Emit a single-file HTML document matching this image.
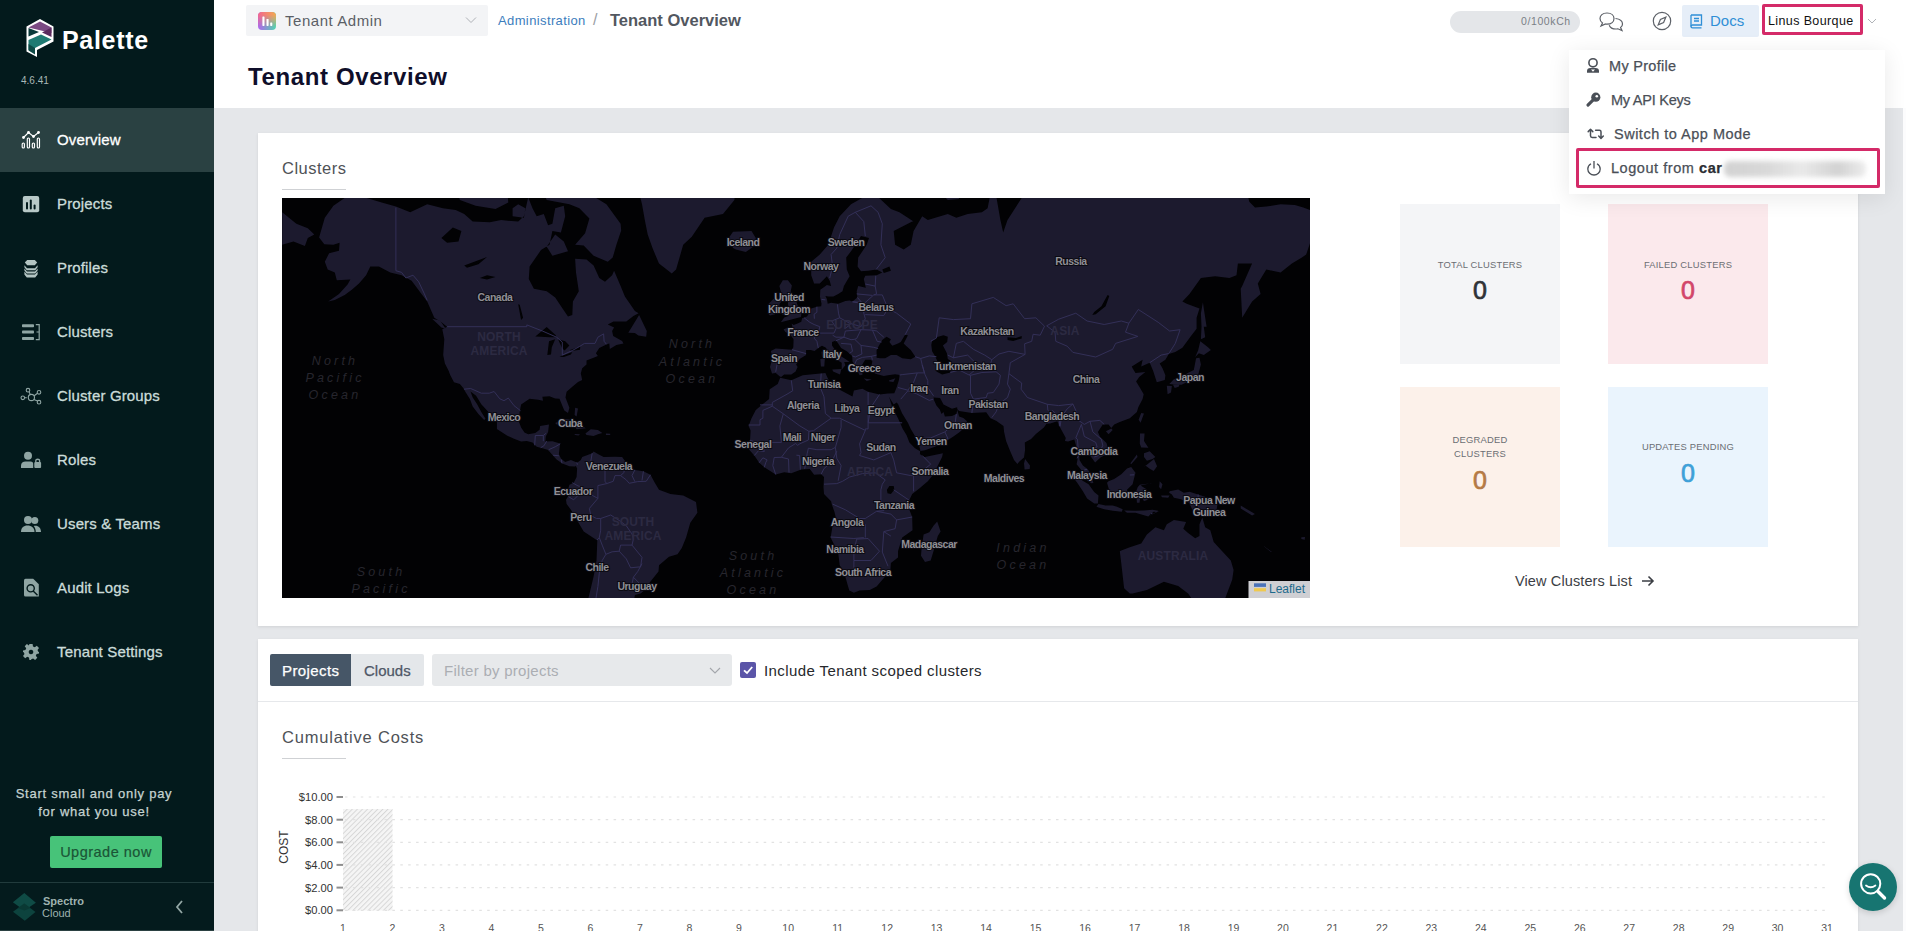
<!DOCTYPE html>
<html><head><meta charset="utf-8">
<style>
*{box-sizing:border-box;margin:0;padding:0}
html,body{width:1906px;height:931px;overflow:hidden;font-family:"Liberation Sans",sans-serif;background:#e5e7ea;position:relative}
.a{position:absolute;white-space:nowrap}
#side{position:absolute;left:0;top:0;width:214px;height:931px;background:#031a1c}
.nav{position:absolute;left:0;width:214px;height:64px;color:#cbdcd9;font-size:15px;-webkit-text-stroke:0.3px currentColor}
.nav.active{background:#2a4142;color:#fff}
.nav span{position:absolute;left:57px;top:23px;letter-spacing:0.15px;white-space:nowrap;line-height:17px}
.nav svg{position:absolute;left:0;top:0}
#hdr{position:absolute;left:214px;top:0;width:1692px;height:108px;background:#fff}
.card{position:absolute;background:#fff;box-shadow:0 1px 3px rgba(0,0,0,0.09)}
.stat{position:absolute;width:160px;height:160px;text-align:center}
.stat .l{position:absolute;left:0;width:160px;font-size:9.4px;letter-spacing:0.22px;color:#6b6e73;line-height:14px}
.stat .n{position:absolute;left:0;width:160px;font-size:25px;font-weight:normal;-webkit-text-stroke:0.7px currentColor;line-height:28px}
.mi{position:absolute;left:0;width:315px;height:34px;font-size:14px;color:#4a4f57}
.mi span{position:absolute;top:9px;line-height:16px}
.yl{position:absolute;left:282px;width:51px;text-align:right;font-size:11.5px;color:#333;line-height:12px}
.xl{position:absolute;top:921px;width:30px;text-align:center;font-size:10.5px;color:#555;line-height:12px}
</style></head><body>
<div id="side">
  <!-- logo -->
  <svg class="a" style="left:24px;top:17px" width="32" height="42" viewBox="0 0 32 42">
    <path d="M2.5 9.5 L16 2 L29.5 9.5 L29.5 24.5 L13 33 L13 40 L2.5 34.5 Z" fill="#fff"/>
    <path d="M4.5 10.5 L16 4.5 L27.5 10.5 L27.5 16 L4.5 10.5 Z" fill="#7b4a83"/>
    <path d="M27.5 10.5 L27.5 20 L18 15.5 Z" fill="#5a2a5d"/>
    <path d="M4.5 11 L15 15 L4.5 19.5 Z" fill="#0b3a3a"/>
    <path d="M4.5 23 L17 17.5 L27.5 22.5 L11 31 L4.5 33 Z" fill="#1f7a72"/>
    <path d="M4.5 27 L11 31 L11 37.5 L4.5 33.5 Z" fill="#0e4a46"/>
  </svg>
  <div class="a" style="left:62px;top:26px;font-size:25px;font-weight:bold;color:#fff;letter-spacing:0.7px;line-height:28px">Palette</div>
  <div class="a" style="left:21px;top:75px;font-size:10px;color:#a9b8b6;line-height:12px">4.6.41</div>

  <div class="nav active" style="top:108px">
    <svg width="60" height="64" viewBox="0 108 60 64"><g fill="none" stroke="#fff" stroke-width="1.15"><rect x="22.2" y="143" width="2.2" height="5" rx="1"/><rect x="27.3" y="138" width="2.2" height="10" rx="1"/><rect x="32.3" y="143" width="2.2" height="5" rx="1"/><rect x="37.3" y="138" width="2.2" height="10" rx="1"/><path d="M23.5 137.5 L28.5 132.5 L33.5 136.5 L38.5 132.5"/></g><g fill="#fff"><circle cx="23.5" cy="137.5" r="1.4"/><circle cx="28.5" cy="132.5" r="1.4"/><circle cx="33.5" cy="136.5" r="1.4"/><circle cx="38.5" cy="132.5" r="1.4"/></g></svg>
    <span>Overview</span></div>
  <div class="nav" style="top:172px"><svg width="60" height="64" viewBox="0 172 60 64"><rect x="22.8" y="196" width="16.4" height="16.2" rx="2" fill="#b8c9c7"/><g fill="#031a1c"><rect x="26" y="202" width="2" height="7.5" rx="1"/><rect x="29.8" y="199.5" width="2" height="10" rx="1"/><rect x="33.6" y="204.5" width="2" height="5" rx="1"/></g></svg><span>Projects</span></div>
  <div class="nav" style="top:236px"><svg width="60" height="64" viewBox="0 236 60 64"><g fill="#b3c4c2"><path d="M24.8 262.6 L27.2 259.9 L34.8 259.9 L37.2 262.6 L34.8 265.3 L27.2 265.3 Z"/><path d="M24.4 265.2 L27 268.2 L35 268.2 L37.6 265.2 L37.6 267.2 L35.2 270.3 L26.8 270.3 L24.4 267.2 Z"/><path d="M24.4 268.4 L27 271.4 L35 271.4 L37.6 268.4 L37.6 270.4 L35.2 273.5 L26.8 273.5 L24.4 270.4 Z"/><path d="M24.4 271.6 L27 274.6 L35 274.6 L37.6 271.6 L37.6 274.6 L35.2 277.6 L26.8 277.6 L24.4 274.6 Z"/></g></svg><span>Profiles</span></div>
  <div class="nav" style="top:300px"><svg width="60" height="64" viewBox="0 300 60 64"><g fill="#8fa5a3"><rect x="22" y="324.2" width="12" height="3" rx="0.8"/><rect x="22" y="330.6" width="12" height="3" rx="0.8"/><rect x="22" y="337" width="12" height="3" rx="0.8"/></g><path d="M35.8 324.6 L39.2 324.6 L39.2 339.6 L35.8 339.6 M36.5 332 L39.2 332" fill="none" stroke="#8fa5a3" stroke-width="1.2"/></svg><span>Clusters</span></div>
  <div class="nav" style="top:364px"><svg width="60" height="64" viewBox="0 364 60 64"><g fill="none" stroke="#8fa5a3" stroke-width="1.1"><circle cx="31.4" cy="397.5" r="3.1"/><circle cx="28" cy="390.2" r="1.8"/><circle cx="39" cy="392.3" r="1.8"/><circle cx="39" cy="402.2" r="1.8"/><circle cx="22.8" cy="397.8" r="1.8"/><path d="M29 391.8 L30.3 394.5 M37.5 393.3 L34.2 395.8 M37.6 401 L33.8 399.4 M24.6 397.8 L26.8 397.8"/></g></svg><span>Cluster Groups</span></div>
  <div class="nav" style="top:428px"><svg width="60" height="64" viewBox="0 428 60 64"><g fill="#8fa5a3"><circle cx="28" cy="455.8" r="4"/><path d="M21 468 L21 465.5 C21 462.8 23 461.5 25.5 461.5 L30.5 461.5 C32.5 461.5 33.2 462.5 33.2 464 L33.2 468 Z"/><rect x="34.3" y="462" width="6.8" height="6" rx="1"/></g><path d="M35.8 462.3 L35.8 460.6 C35.8 458.8 39.6 458.8 39.6 460.6 L39.6 462.3" fill="none" stroke="#8fa5a3" stroke-width="1.3"/></svg><span>Roles</span></div>
  <div class="nav" style="top:492px"><svg width="60" height="64" viewBox="0 492 60 64"><g fill="#8fa5a3"><circle cx="28" cy="520" r="4"/><circle cx="34.8" cy="520.5" r="3.5"/><path d="M21 532 C21 528 23.5 525.6 27.5 525.6 C31.5 525.6 34.5 528 34.5 532 Z"/><path d="M35.8 532 C35.8 529.5 35 527.5 33.8 526 C34.3 525.8 34.8 525.7 35.3 525.7 C38.8 525.7 41 528 41 532 Z"/></g></svg><span>Users &amp; Teams</span></div>
  <div class="nav" style="top:556px"><svg width="60" height="64" viewBox="0 556 60 64"><path d="M25.5 578.8 L33.2 578.8 L38.8 584.2 L38.8 596.5 L25.5 596.5 Q24 596.5 24 595 L24 580.3 Q24 578.8 25.5 578.8 Z" fill="#8fa5a3"/><g fill="none" stroke="#031a1c" stroke-width="1.4"><circle cx="30.7" cy="588.3" r="3.6"/><path d="M33.2 590.9 L37.5 595.2"/></g></svg><span>Audit Logs</span></div>
  <div class="nav" style="top:620px"><svg width="60" height="64" viewBox="0 620 60 64"><g transform="translate(31 652)"><path fill="#8fa5a3" fill-rule="evenodd" d="M-1.6 -8 L1.6 -8 L2 -5.6 L3.8 -4.8 L5.8 -6.3 L8 -4.1 L6.5 -2.1 L7.3 -0.3 L8 0 L8 1.6 L5.6 2 L4.8 3.8 L6.3 5.8 L4.1 8 L2.1 6.5 L0.3 7.3 L0 8 L-1.6 8 L-2 5.6 L-3.8 4.8 L-5.8 6.3 L-8 4.1 L-6.5 2.1 L-7.3 0.3 L-8 0 L-8 -1.6 L-5.6 -2 L-4.8 -3.8 L-6.3 -5.8 L-4.1 -8 L-2.1 -6.5 Z M0 -2.3 A2.3 2.3 0 1 0 0.01 -2.3 Z"/></g></svg><span>Tenant Settings</span></div>

  <div class="a" style="left:-13px;top:785px;width:214px;text-align:center;font-size:13px;line-height:18px;color:#c5d3d1;letter-spacing:0.75px;-webkit-text-stroke:0.25px currentColor">Start small and only pay<br>for what you use!</div>
  <div class="a" style="left:50px;top:836px;width:112px;height:32px;background:#47c379;border-radius:2px;color:#1b5536;font-size:14.5px;text-align:center;line-height:32px;letter-spacing:0.5px;-webkit-text-stroke:0.2px currentColor">Upgrade now</div>
  <div class="a" style="left:0;top:882px;width:214px;height:1px;background:#213b3c"></div>
  <div class="a" style="left:0;top:883px;width:214px;height:48px;background:#041b1d"></div><div class="a" style="left:0;top:930px;width:214px;height:1px;background:#2b4142"></div>
  <svg class="a" style="left:8px;top:886px" width="40" height="40" viewBox="8 886 40 40"><path d="M24.3 893 L35.9 902.7 L24.3 910.5 L12.9 902.3 Z" fill="#0f4b45"/><path d="M13 911.8 L24.3 903.5 L35.5 912 L24.8 920.7 Z" fill="#0d433e"/><path d="M18 908 L24.3 903.5 L30.5 908 L24.3 910.5 Z" fill="#0a3934"/></svg>
  <div class="a" style="left:43px;top:895px;font-size:11px;font-weight:bold;color:#9fb3b0;line-height:12px">Spectro</div>
  <div class="a" style="left:42px;top:907px;font-size:11px;color:#9fb3b0;line-height:12px">Cloud</div>
  <svg class="a" style="left:174px;top:899px" width="12" height="16"><path d="M8 2 L3 8 L8 14" fill="none" stroke="#93a7a5" stroke-width="1.8"/></svg>
</div>

<div id="hdr"></div>
<!-- tenant dropdown -->
<div class="a" style="left:246px;top:5px;width:242px;height:31px;background:#f3f4f6;border-radius:2px"></div>
<svg class="a" style="left:258px;top:12px" width="18" height="18" viewBox="0 0 18 18"><defs><linearGradient id="tg1" x1="0" y1="0" x2="1" y2="0"><stop offset="0" stop-color="#f2668f"/><stop offset="1" stop-color="#f3aa52"/></linearGradient><linearGradient id="tg2" x1="0" y1="0" x2="1" y2="0"><stop offset="0" stop-color="#b066ee"/><stop offset="1" stop-color="#4fd6ae"/></linearGradient><linearGradient id="tgm" x1="0" y1="0" x2="0" y2="1"><stop offset="0.15" stop-color="#fff"/><stop offset="0.85" stop-color="#000"/></linearGradient><mask id="tmask"><rect width="18" height="18" fill="url(#tgm)"/></mask><clipPath id="tclip"><rect width="18" height="18" rx="4"/></clipPath></defs><g clip-path="url(#tclip)"><rect width="18" height="18" fill="url(#tg2)"/><rect width="18" height="18" fill="url(#tg1)" mask="url(#tmask)"/></g><g fill="#fff"><rect x="4.4" y="4.4" width="2.1" height="9.5" rx="0.6"/><rect x="8.5" y="7" width="2.1" height="6.9" rx="0.6"/><rect x="12.2" y="10.4" width="2.1" height="3.5" rx="0.6"/></g></svg>
<div class="a" style="left:285px;top:12px;font-size:15px;color:#5b5f66;line-height:17px;letter-spacing:0.55px">Tenant Admin</div>
<svg class="a" style="left:464px;top:15px" width="14" height="10"><path d="M2 2.5 L7 7.5 L12 2.5" fill="none" stroke="#aeb1b6" stroke-width="1"/></svg>
<div class="a" style="left:498px;top:13px;font-size:13px;color:#3c7dbd;line-height:15px;letter-spacing:0.38px">Administration</div>
<div class="a" style="left:593px;top:11px;font-size:16px;color:#9a9ea4;line-height:18px">/</div>
<div class="a" style="left:610px;top:11px;font-size:16.5px;font-weight:bold;color:#52575f;line-height:18px">Tenant Overview</div>
<div class="a" style="left:248px;top:63px;font-size:24px;font-weight:bold;color:#0f0e2a;line-height:27px;letter-spacing:0.62px">Tenant Overview</div>

<!-- right header -->
<div class="a" style="left:1450px;top:11px;width:130px;height:22px;border-radius:11px;background:#e4e6e9"></div>
<div class="a" style="left:1521px;top:15px;font-size:10.5px;color:#7a7f86;line-height:13px;letter-spacing:0.6px">0/100kCh</div>
<svg class="a" style="left:1598px;top:10px" width="28" height="22" viewBox="0 0 28 22"><g fill="none" stroke="#5d6168" stroke-width="1.2"><path d="M9 3 C4.5 3 2 5.5 2 8.5 C2 10.5 3 12 4.5 13 L3 16 L7.5 14 C8 14.1 8.5 14.2 9 14.2 C13.5 14.2 16 11.5 16 8.5 C16 5.5 13.5 3 9 3 Z"/><path d="M17.5 8.5 C21.5 9 24.5 11.2 24.5 14 C24.5 15.6 23.8 16.8 22.6 17.6 L24 20.5 L19.8 18.8 C19.2 18.9 18.6 19 18 19 C14.6 19 12 17.3 11.2 15.2"/></g></svg>
<svg class="a" style="left:1651px;top:10px" width="22" height="22" viewBox="0 0 22 22"><g fill="none" stroke="#5d6168" stroke-width="1.2"><circle cx="11" cy="11" r="8.7"/><path d="M14.8 7.2 L12.6 12.6 L7.2 14.8 L9.4 9.4 Z"/></g></svg>
<div class="a" style="left:1682px;top:5px;width:77px;height:32px;background:#e6eef8;border-radius:2px"></div>
<svg class="a" style="left:1689px;top:13px" width="15" height="16" viewBox="0 0 15 16"><g fill="none" stroke="#2f8fd6" stroke-width="1.3"><path d="M2 2 L12.5 2 L12.5 12 L3.5 12 C2.5 12 2 12.8 2 13.5 C2 14.3 2.5 14.8 3.5 14.8 L12.5 14.8"/><path d="M2 2 L2 13.5"/><path d="M5 5.5 L10 5.5 M5 8 L10 8"/></g></svg>
<div class="a" style="left:1710px;top:12px;font-size:15px;color:#2f8fd6;line-height:17px">Docs</div>
<div class="a" style="left:1762px;top:4px;width:101px;height:31px;border:3px solid #d42a68;border-radius:2px;background:#fff"></div>
<div class="a" style="left:1768px;top:14px;font-size:12.5px;color:#111;line-height:15px;letter-spacing:0.38px">Linus Bourque</div>
<svg class="a" style="left:1866px;top:17px" width="12" height="9"><path d="M2 2 L6 6 L10 2" fill="none" stroke="#b0b3b8" stroke-width="1"/></svg>

<!-- cards -->
<div class="card" style="left:258px;top:133px;width:1600px;height:493px"></div>
<div class="a" style="left:282px;top:159px;font-size:16.5px;color:#4f5257;line-height:19px;letter-spacing:0.5px">Clusters</div>
<div class="a" style="left:282px;top:189px;width:64px;height:1px;background:#cfd1d4"></div>
<div id="map" class="a" style="left:282px;top:198px;width:1028px;height:400px;background:#020204;overflow:hidden"><svg width="1028" height="400" viewBox="0 0 1028 400" style="position:absolute;left:0;top:0" font-family="Liberation Sans"><path fill="#1c1a2e" d="M488.0 169.1 490.0 175.6 493.7 174.9 497.9 178.4 499.1 179.1 500.8 182.6 543.4 189.5 606.0 199.5 608.9 204.4 638.2 252.9 643.0 252.3 653.0 248.8 662.9 244.1 671.4 238.4 677.1 234.5 679.4 232.4 682.3 227.9 685.1 223.3 681.4 219.9 677.1 218.6 675.1 211.1 677.1 213.0 689.9 214.9 704.2 214.3 708.4 220.2 714.1 222.7 721.5 227.9 722.1 233.9 724.1 242.9 727.8 252.3 732.0 261.9 735.4 265.9 737.4 263.6 742.0 259.5 743.1 251.7 742.8 244.4 749.1 241.1 753.9 236.0 761.9 229.4 764.5 225.7 768.2 225.4 775.3 223.3 777.3 227.9 783.8 239.9 782.9 242.9 786.1 243.5 792.3 241.4 795.2 251.7 795.7 260.4 794.6 266.2 800.3 273.3 803.1 281.0 809.4 285.3 811.4 285.0 809.1 276.2 805.7 271.3 800.9 267.6 797.5 261.9 797.2 257.5 799.4 250.8 802.3 252.6 808.0 257.5 813.1 264.4 818.8 259.3 825.6 256.1 825.9 250.2 824.5 245.0 817.9 238.4 815.9 233.9 820.8 226.4 826.5 226.4 829.3 230.0 832.2 226.4 837.8 223.9 847.8 220.2 854.9 213.9 856.3 209.2 860.6 201.1 861.7 196.2 857.8 189.5 854.1 183.6 857.2 179.1 863.4 174.1 853.5 174.9 850.6 170.2 849.8 168.4 860.6 161.7 859.2 168.4 867.7 164.7 871.1 172.7 874.8 184.3 882.8 181.9 883.4 177.3 880.5 170.2 877.7 165.4 883.4 161.7 886.8 156.0 893.3 154.0 900.4 149.7 909.0 138.0 914.6 130.8 914.6 119.8 917.5 110.6 904.7 105.8 900.4 103.4 907.5 95.9 918.9 80.0 933.1 78.3 947.4 80.0 954.5 77.2 955.9 65.6 970.1 65.6 960.2 88.1 958.7 90.7 960.2 119.8 965.8 110.6 970.1 103.4 978.6 95.9 975.8 85.4 984.3 71.5 998.6 74.4 1009.9 65.6 1019.9 59.6 1024.2 56.5 1029.8 40.1 1029.8 12.7 1021.3 9.5 1012.8 7.0 998.6 6.2 984.3 8.6 973.0 9.5 967.3 3.7 965.8 -2.4 964.4 -41.4 748.2 -41.4 748.2 -16.0 744.0 -6.8 725.5 22.1 721.2 34.5 718.4 22.1 711.3 -18.8 705.6 10.3 699.9 14.3 685.7 15.9 674.3 19.8 665.8 15.9 645.8 22.1 640.2 18.2 631.6 33.1 628.8 46.8 621.7 51.4 613.1 46.8 611.7 33.1 630.2 23.6 631.6 23.6 617.4 14.3 608.9 11.1 594.6 -2.4 587.5 -4.1 569.0 6.2 557.7 18.2 552.0 29.5 546.3 46.8 537.8 56.5 529.2 63.8 529.2 77.2 532.1 85.4 537.8 85.4 544.9 78.3 547.7 82.7 549.1 88.1 544.9 87.0 538.3 91.8 538.0 98.4 539.5 105.8 539.2 108.2 534.9 108.7 529.2 110.6 527.8 113.9 525.0 118.5 520.1 120.3 519.3 123.8 515.6 125.6 511.6 126.9 509.6 125.6 510.7 130.0 506.5 129.5 501.6 131.3 503.1 133.8 508.7 137.2 511.6 141.3 511.3 149.3 509.9 151.7 503.6 151.3 493.7 150.5 488.8 152.9 490.0 157.1 489.7 162.8ZM0.2 46.8 11.5 43.5 22.9 48.1 25.8 40.1 32.3 36.6 25.8 30.2 14.4 25.8 0.2 14.3 0.2 -41.4ZM37.1 39.4 42.8 19.8 51.4 7.8 69.8 -5.0 82.6 -0.6 99.7 4.5 113.9 8.6 128.2 14.3 145.2 6.2 160.9 10.3 173.7 11.9 182.2 15.9 190.7 23.6 207.8 24.3 219.2 22.1 236.2 23.6 241.9 18.2 246.2 -0.6 250.5 10.3 254.7 18.2 261.8 15.9 266.1 27.3 270.4 25.8 273.2 10.3 281.8 7.8 283.2 18.2 278.9 34.5 270.4 33.1 267.5 46.8 259.0 52.0 247.6 68.6 246.8 81.1 251.9 90.7 264.7 93.3 273.2 99.4 280.9 111.0 286.0 118.5 290.3 117.1 290.9 103.4 296.8 93.3 294.0 74.4 293.1 60.8 304.5 61.4 311.6 67.4 317.3 80.0 323.0 83.8 330.1 77.2 332.1 72.7 338.6 88.1 342.9 98.4 352.9 112.9 356.6 115.2 351.4 118.0 344.3 123.4 331.5 123.4 325.8 126.5 332.1 129.5 330.1 133.0 331.2 138.0 340.1 142.9 341.5 145.4 334.4 147.0 327.8 150.9 327.3 145.4 324.4 146.6 317.3 150.1 313.9 155.2 315.9 157.9 311.6 159.8 304.5 162.4 304.5 166.5 300.2 170.2 298.8 175.6 300.2 181.9 296.0 184.0 290.3 188.8 284.6 193.8 283.5 199.5 287.4 209.8 286.0 214.9 282.3 212.4 279.8 206.6 277.5 200.8 273.2 200.5 267.5 198.2 260.4 198.8 261.0 202.7 256.2 201.8 247.6 200.8 239.1 206.6 237.7 213.9 236.8 223.3 239.1 229.4 242.5 234.5 246.2 236.3 253.3 235.1 257.6 231.8 258.1 227.9 267.0 226.4 266.1 233.9 263.8 238.4 263.3 243.5 270.4 243.2 278.1 245.5 276.9 256.1 278.9 260.4 283.2 263.9 288.9 261.9 294.8 264.4 295.4 266.7 293.1 268.5 287.4 268.2 280.3 265.6 274.6 261.6 270.9 257.5 266.1 252.0 260.4 250.2 254.7 248.8 250.5 244.4 244.8 242.9 239.1 243.5 232.0 240.8 224.9 237.5 214.9 230.9 214.9 223.3 207.8 215.5 199.3 206.3 194.1 197.8 188.5 193.5 190.7 199.5 195.0 206.0 199.3 213.9 203.5 220.8 202.1 222.1 196.4 216.1 190.7 208.5 187.9 201.1 183.6 194.2 181.6 190.5 177.9 186.1 172.0 184.3 168.3 177.3 166.6 172.7 162.9 165.4 161.2 157.1 162.3 141.3 160.3 131.3 165.1 128.7 159.4 124.3 152.3 119.8 145.2 103.4 139.5 95.9 129.6 82.7 119.6 77.2 108.2 74.4 96.9 68.6 88.3 68.6 84.1 77.2 77.0 85.4 69.8 91.8 62.7 96.9 52.8 101.9 46.2 103.4 57.0 95.9 65.6 86.5 68.4 81.6 54.8 82.2 52.8 74.4 45.7 71.5 42.8 63.8 47.1 55.2 57.0 52.7 57.6 44.8 51.4 46.8 42.3 46.2ZM307.4 -78.1 355.7 -11.3 360.0 6.2 362.8 22.1 365.7 36.6 370.5 50.1 377.0 65.6 389.8 75.5 394.1 71.5 401.2 46.8 409.8 38.7 422.6 19.8 441.0 15.9 452.4 2.0 453.8 -11.3 463.8 -78.1ZM339.2 32.4 334.4 46.8 330.7 59.6 325.8 63.8 311.6 57.7 301.7 47.5 293.1 46.8 303.1 35.2 307.4 20.5 297.4 10.3 287.4 6.2 264.7 2.0 259.0 -11.3 287.4 -30.8 310.2 -2.4 324.4 6.2 338.6 25.8ZM177.9 2.0 193.6 7.8 213.5 11.1 226.3 4.5 224.9 -11.3 182.2 -20.8 175.1 -6.8ZM264.7 48.8 270.4 57.7 286.0 53.3 281.8 43.5 273.2 36.6ZM230.6 18.2 241.9 19.8 243.4 10.3 236.2 6.2 230.6 10.3Z"/>
<path fill="#020204" d="M546.3 98.4 551.4 98.4 556.2 95.9 560.5 93.3 561.9 88.1 567.6 78.3 564.8 71.5 564.2 59.6 569.0 53.3 574.7 44.8 579.0 38.0 587.0 40.1 584.7 46.8 576.2 59.6 575.6 68.6 579.0 73.2 586.1 72.7 594.6 71.5 600.3 74.4 594.6 77.2 583.3 77.8 581.8 81.1 583.8 89.7 576.2 88.1 574.7 93.3 575.3 99.4 570.5 103.4 567.6 102.4 563.4 102.9 556.2 105.8 549.1 104.8 545.7 105.8 544.9 100.9 543.4 97.9ZM499.1 179.1 502.2 176.6 509.3 176.6 513.6 173.4 515.6 169.1 514.1 166.5 517.6 160.9 524.1 157.1 524.1 152.1 528.7 152.1 532.6 152.9 536.3 150.1 540.0 147.8 544.0 149.7 546.3 155.2 550.6 159.0 554.8 161.7 559.7 164.7 559.7 172.0 561.9 169.1 563.4 167.3 562.2 163.9 567.6 163.9 563.4 160.9 557.7 157.5 554.8 154.4 550.0 147.4 550.0 144.1 554.0 142.5 556.2 145.4 559.1 150.1 564.8 153.3 570.2 157.9 570.5 163.5 572.5 166.5 575.3 172.7 577.6 177.3 580.4 177.0 580.4 172.0 583.3 172.0 579.9 167.3 581.8 163.9 583.3 161.7 589.0 161.7 590.4 163.5 589.5 166.9 591.8 170.2 592.7 175.6 596.1 176.6 601.8 178.1 606.0 177.3 613.1 176.3 617.7 177.0 616.8 182.6 614.6 189.5 612.3 195.2 606.0 195.5 606.0 202.7 500.8 202.7 499.1 180.2ZM594.6 159.8 594.6 152.1 596.6 148.2 600.3 142.1 604.6 138.8 608.9 141.3 607.4 144.1 610.3 147.8 616.0 145.4 618.8 144.1 623.1 136.8 625.9 137.2 623.9 141.3 621.7 145.4 624.5 148.2 628.8 152.1 633.3 158.7 628.8 161.3 620.2 160.2 614.6 157.1 608.9 157.1 603.2 160.2 598.1 160.2ZM654.4 139.2 661.5 137.2 665.8 138.8 665.2 144.1 660.9 147.4 664.9 155.2 665.8 160.9 668.6 162.8 668.3 174.5 660.1 176.6 654.4 173.4 655.8 163.9 653.0 157.9 650.1 153.3 649.3 147.0 650.1 142.9ZM607.4 199.5 611.7 206.6 614.6 204.4 616.0 206.0 620.2 215.5 625.9 224.8 628.8 230.9 635.9 242.9 638.4 252.6 637.3 254.0 600.3 230.9 600.3 199.5ZM651.5 199.5 658.1 200.1 661.5 206.6 670.0 210.8 675.1 209.2 675.4 211.7 674.3 216.1 670.0 218.0 662.9 218.6 661.5 213.9 659.5 216.1 657.8 211.4 654.4 207.6 651.5 201.1Z"/>
<path fill="#1c1a2e" d="M498.2 179.8 509.3 182.3 520.7 177.3 543.4 174.9 546.6 181.9 543.4 186.1 547.7 189.1 557.7 191.8 570.5 198.5 571.9 192.5 580.4 190.8 586.1 193.8 597.5 196.5 606.0 195.5 607.4 199.8 610.3 209.2 616.0 220.2 620.8 230.9 624.5 236.9 627.4 244.4 633.0 250.2 638.2 253.2 637.9 256.1 641.6 259.3 660.9 255.2 660.1 259.0 651.5 276.2 645.8 283.3 637.3 290.4 630.2 296.1 626.8 303.2 627.4 311.8 630.2 319.0 630.5 332.2 620.2 339.6 616.0 353.2 616.0 359.4 608.9 365.0 608.3 373.6 603.2 378.5 594.6 388.5 587.8 391.9 577.6 392.6 571.9 394.7 567.3 392.6 565.6 386.8 561.9 373.6 557.7 367.2 556.2 354.7 548.6 339.6 550.6 327.8 554.0 320.5 552.5 314.1 549.7 306.1 549.1 303.2 542.0 296.1 541.5 289.0 542.0 279.0 539.2 276.2 532.1 276.8 527.8 271.0 519.3 271.6 509.3 275.3 502.2 274.2 493.7 276.5 482.3 269.3 477.2 264.7 472.3 257.5 467.2 251.7 465.2 246.7 468.1 241.4 468.6 232.4 466.6 227.9 469.5 220.2 473.8 212.1 480.9 206.0 487.1 201.1 487.7 191.2 495.7 186.1ZM295.1 264.7 298.8 261.9 300.2 259.0 310.2 255.2 311.6 253.5 315.9 256.1 321.6 259.0 333.0 258.7 340.1 259.0 344.3 264.7 352.9 271.9 361.4 273.3 368.5 276.8 372.8 284.7 377.0 291.8 388.4 296.1 401.2 297.5 414.0 304.1 415.4 314.7 408.3 324.8 404.1 339.6 399.8 350.1 395.5 356.3 387.0 358.7 377.0 367.2 376.5 373.6 367.1 385.2 362.8 391.9 358.6 395.4 352.9 397.1 351.4 406.0 338.6 409.6 330.1 420.9 323.0 436.7 318.7 458.2 320.2 465.1 310.2 472.2 301.7 453.7 304.5 432.6 305.9 420.9 305.9 402.4 311.6 378.5 314.5 362.5 315.3 342.6 301.7 333.6 297.4 326.3 288.9 311.8 284.6 306.1 284.0 301.8 287.4 296.1 286.0 291.8 287.4 286.7 291.7 284.7 294.6 279.0 295.1 270.5 293.7 267.6ZM655.2 323.4 658.6 333.6 655.8 338.1 651.5 353.2 648.7 362.5 643.0 364.1 639.0 357.8 639.6 350.1 641.6 336.6 647.3 334.2 651.5 327.8ZM451.0 50.1 446.7 40.1 451.0 33.8 469.5 33.1 473.8 40.1 472.3 48.1 463.8 53.9 453.8 51.4ZM273.2 225.1 281.8 221.1 287.4 221.4 294.6 225.4 303.9 230.3 294.6 231.2 293.1 228.8 283.2 226.1 274.6 226.4ZM303.4 235.4 308.8 231.2 315.9 232.1 320.4 235.1 315.9 236.3 311.6 238.1 304.5 236.9ZM292.3 236.0 298.0 236.3 296.5 237.5 293.1 236.9ZM323.9 235.4 328.4 235.7 328.1 236.9 323.9 236.9ZM293.1 209.8 296.0 210.5 294.6 218.6 292.6 217.1ZM498.8 124.3 519.0 118.9 519.8 112.5 515.9 108.2 514.4 103.4 510.4 97.9 508.7 93.3 509.9 87.6 505.9 82.2 500.8 82.2 497.4 88.1 499.1 94.8 500.8 100.9 506.5 101.4 505.9 105.8 506.5 108.7 501.9 111.5 499.9 116.2 506.5 118.0 502.2 119.4ZM497.9 114.3 497.4 106.3 499.4 103.4 495.1 99.4 491.4 100.9 486.6 105.8 487.1 110.6 485.7 115.2 488.0 117.5 492.2 116.6ZM550.3 171.6 559.4 170.9 558.0 176.6 551.1 173.4ZM538.3 160.9 542.9 160.5 542.3 168.4 538.9 168.4ZM539.5 153.7 542.0 153.3 541.7 159.4 540.0 158.7ZM581.8 180.5 589.8 181.6 584.7 183.0ZM606.9 182.6 613.4 180.2 611.4 184.0 607.4 183.6ZM742.0 265.6 742.6 271.6 747.7 271.0 748.0 267.6 743.1 261.0ZM887.3 186.1 891.9 181.2 900.4 180.2 904.7 175.6 911.8 172.0 913.2 164.7 914.1 160.2 917.5 159.8 918.9 166.5 916.1 177.3 915.5 182.6 912.4 183.0 909.8 184.0 904.7 184.3 899.6 186.7 891.9 186.4ZM884.8 187.8 889.9 188.1 889.0 194.5 885.6 196.2ZM891.0 186.7 897.9 185.4 896.7 188.8 892.7 190.1ZM913.2 159.0 916.1 152.5 918.3 143.3 926.0 149.3 928.9 152.1 921.8 157.1 916.9 155.2ZM918.9 141.3 923.2 139.2 921.8 128.7 924.6 128.7 921.8 110.6 920.9 104.3 918.9 115.2 919.5 128.7ZM856.6 221.7 859.2 214.9 862.0 215.5 858.6 224.8ZM823.9 233.3 829.3 230.6 830.7 232.1 826.5 236.3ZM858.0 235.4 862.6 235.4 862.0 242.9 867.7 251.7 866.3 249.7 859.2 249.4 857.8 245.8ZM862.0 269.0 872.0 261.0 875.1 268.2 871.7 273.0 867.7 270.8 863.4 267.6ZM862.0 255.2 867.7 253.2 873.4 259.0 870.6 261.0 864.9 262.7 862.0 259.0ZM848.4 265.3 854.9 256.6 855.5 259.0 849.2 266.2ZM825.0 284.7 827.9 294.7 830.7 297.5 840.7 299.8 846.4 296.1 845.0 291.8 850.6 286.2 853.5 274.8 849.2 269.0 845.0 270.5 839.3 276.2 832.2 281.0 826.5 283.3ZM786.1 273.0 792.3 274.2 800.3 282.5 806.6 286.2 812.2 294.1 816.5 297.5 815.9 305.5 812.2 305.5 805.1 300.4 800.9 293.3 795.2 284.7 790.9 279.0ZM814.5 308.4 816.5 306.1 823.6 307.5 830.7 307.5 835.0 308.7 840.7 311.3 839.8 313.8 830.7 312.7 822.2 311.3 815.1 309.0ZM854.9 304.7 854.6 299.0 852.9 296.4 855.8 289.0 857.8 286.7 869.1 285.3 870.6 284.7 858.6 287.6 864.9 291.6 860.6 291.8 865.7 301.8 862.0 303.2 858.6 297.0 857.5 304.7ZM842.1 312.4 853.5 312.7 862.0 312.4 870.6 311.8 876.2 312.7 870.6 316.1 866.3 318.5 853.5 314.7 845.0 314.7ZM866.3 318.5 877.1 313.0 870.6 314.1ZM877.7 283.3 880.5 286.2 879.1 291.3 877.1 289.0ZM879.1 297.5 887.6 297.5 886.2 299.8 879.9 299.2ZM887.6 293.3 896.2 291.6 901.8 294.7 907.5 293.8 916.1 296.4 926.0 299.8 930.3 304.7 935.4 306.7 934.6 311.8 941.7 318.5 936.0 317.6 930.3 312.7 923.2 314.7 916.1 315.0 910.4 311.8 907.0 304.7 899.0 301.2 891.9 299.8 889.9 296.4 887.1 294.7ZM937.4 304.7 947.4 301.0 948.2 303.2 943.1 307.0 937.4 306.4ZM958.7 307.5 973.0 316.1 970.1 317.6 958.7 310.4ZM837.8 353.2 839.3 365.6 842.1 390.2 847.8 395.4 850.6 395.4 864.9 391.9 881.9 383.8 896.2 387.9 906.1 395.4 913.2 406.0 927.4 407.8 941.7 404.2 950.2 381.8 951.6 372.0 948.8 362.5 940.2 353.2 931.7 344.1 928.3 332.2 923.2 329.2 920.3 319.6 917.5 326.3 917.5 338.1 913.2 340.2 906.1 335.1 901.3 330.7 904.1 324.0 891.9 321.9 884.8 326.3 881.9 332.2 873.4 329.2 864.9 336.6 859.2 345.6 847.8 349.2 839.3 352.6ZM1006.2 393.3 1011.4 397.1 1015.1 402.4 1022.7 404.9 1015.6 411.5 1012.8 419.0 1008.5 409.6 1011.4 402.4ZM981.5 347.7 990.0 354.1 988.6 353.8 982.1 348.6ZM1019.3 339.3 1023.0 339.0 1022.7 341.7 1019.3 341.1ZM150.1 120.7 158.0 122.5 163.7 130.8 159.4 129.5ZM346.3 134.7 357.1 117.1 364.8 133.0 364.2 138.8 356.3 137.6 352.9 135.1ZM661.5 -2.4 665.8 2.0 677.1 1.1 671.4 -16.0Z"/><path fill="#020204" d="M253.3 138.4 264.7 129.1 273.8 137.2 274.6 139.2 267.5 139.2 259.0 138.8ZM265.3 157.1 267.0 143.3 273.2 141.3 269.8 149.3 269.0 156.4ZM276.1 141.3 283.2 143.3 287.4 147.4 282.6 152.5 280.3 150.5 277.5 144.6ZM277.5 158.7 290.3 154.0 288.9 156.4 281.8 159.0ZM288.0 152.1 298.3 148.6 298.0 151.7 288.9 152.9ZM236.2 106.3 239.1 122.1 241.1 119.8 237.7 106.8ZM182.2 67.4 205.0 59.0 196.4 66.2 185.0 69.8ZM159.4 40.1 170.8 29.5 179.4 33.1 176.5 43.5 165.1 44.8ZM810.3 117.1 813.7 116.2 823.6 108.2 827.3 97.9 825.6 96.9 819.4 108.2 812.2 113.9ZM725.5 139.2 734.0 140.1 739.7 138.0 739.7 140.5 731.2 142.9 725.5 142.1ZM604.9 291.8 607.4 288.1 611.7 288.1 612.3 291.8 608.9 296.1 605.5 295.3ZM600.3 71.5 607.4 68.6 608.9 72.7 601.8 74.9ZM197.8 80.0 205.0 77.2 213.5 78.9 205.0 81.6Z"/><path fill="none" stroke="#36325c" stroke-width="0.9" d="M113.9 9.5 113.9 72.7 119.6 74.4 123.9 80.0 131.0 77.2 136.7 83.8 142.4 95.9 145.2 102.4M165.1 128.7 244.8 128.7 244.8 126.9 260.4 133.0 274.6 139.2 280.3 144.1 280.3 157.1 290.3 152.5 297.4 148.6 302.5 145.4 313.0 145.4 315.9 139.2 321.6 135.9 322.1 143.3 324.4 146.2M181.9 191.2 188.7 190.5 199.3 195.2 207.2 195.2 212.1 193.5 217.8 200.8 222.0 202.7 226.3 200.1 232.0 207.6 238.5 212.7M252.7 247.3 253.3 237.5 261.3 237.5 263.8 235.4M261.3 237.5 261.3 243.2M258.7 249.7 261.8 247.9 264.7 243.2M266.7 251.7 273.2 248.8 278.3 245.8M271.2 257.2 276.9 257.8M279.2 261.6 280.0 265.3M294.8 264.4 295.4 266.7M310.2 255.2 308.8 263.3 310.2 269.0 315.9 269.6 323.0 271.9 323.0 283.3 324.7 285.6M344.3 264.7 341.5 271.9 342.3 274.2 338.6 277.6 333.0 277.6 331.2 283.3 324.7 285.6M352.9 271.9 350.0 277.6 352.9 283.6M361.4 273.3 360.0 282.5M368.5 276.8 364.2 283.3 355.7 283.6 347.2 285.3 344.3 281.9 338.6 277.6M324.7 285.6 315.9 287.6 315.9 300.4 307.4 310.4 308.8 317.6 314.5 320.5 318.7 320.5M290.3 284.7 296.0 287.9 300.8 289.3 307.4 295.8 315.9 300.4M286.6 298.7 291.7 301.8 300.2 293.3 300.8 289.3M318.7 320.5 328.7 317.0 338.6 323.4 344.3 327.8 350.0 336.0 351.4 341.1 350.0 347.1 338.6 347.1 337.2 353.2 330.1 353.8 323.9 356.3 320.2 347.1 317.3 339.6 318.7 332.2 318.7 320.5M315.0 342.0 317.3 339.6M323.9 356.3 320.2 362.5 317.3 375.3 315.9 388.5 313.0 406.0 311.6 420.9 310.2 440.8 307.4 453.7 318.7 462.8M350.0 347.1 360.0 359.4 358.6 368.8 348.6 369.8 344.3 360.9 337.2 353.2M360.0 365.6 355.7 373.6 351.4 379.2 362.8 390.9M351.4 379.2 349.2 390.2M509.3 182.3 510.7 192.8 505.0 196.2 490.3 204.4 490.3 208.2M478.0 206.9 490.3 206.9M466.6 227.0 478.0 227.0 478.0 221.7 480.9 220.2 480.9 212.4 490.3 208.2 501.3 215.8 497.9 227.9 499.4 244.4 482.3 244.4 480.3 246.4 468.1 242.3M501.3 215.8 517.8 227.9 526.9 233.3 531.5 232.7 549.1 220.2M539.2 175.6 538.3 189.5 542.0 198.8 543.4 215.5 549.1 220.2M586.1 194.2 586.1 224.8 620.2 224.8M549.1 220.2 557.7 220.2 583.3 232.4 583.3 230.9 586.1 230.9 586.1 224.8M559.1 221.7 559.1 229.4 553.4 249.4M525.2 255.5 526.4 250.2 534.9 251.7 549.1 251.7 553.4 249.4M526.9 233.3 526.4 242.0 517.8 245.8 515.6 247.3 513.6 245.5 506.5 249.9 499.4 259.3 492.2 259.5 490.8 267.6 493.7 276.5M482.3 269.3 483.7 264.7 485.1 261.9 480.9 259.8 477.2 264.7M472.3 257.5 476.6 252.6 482.3 253.5 480.3 246.4M507.0 274.5 506.5 261.0 499.4 259.3M518.4 271.6 517.6 257.5 514.4 257.2M522.7 270.8 525.2 255.5M583.3 232.4 577.6 245.8 579.0 254.6 577.6 257.5 591.8 261.9 608.9 254.6 611.7 261.9 614.6 274.8 628.8 277.6 634.5 277.6 648.7 266.2 640.2 257.5M631.6 293.3 631.6 277.6M611.7 291.8 627.4 302.4M630.2 319.0 614.6 321.9 613.1 330.7 601.8 333.6 600.3 354.1 606.0 368.2M550.6 306.1 563.4 311.8 577.6 320.5 583.3 320.5 594.6 313.3 601.8 312.7 598.9 301.8 598.9 291.8 600.3 286.2 603.2 281.9 593.2 274.8 580.4 275.6 567.6 279.0 560.5 283.3 554.8 285.6 542.0 286.2M556.2 282.7 559.1 267.6 554.8 260.4 553.4 249.4M539.2 276.2 542.0 270.5 549.1 264.7 552.0 259.0 554.8 253.2M548.6 339.0 571.9 340.5 581.8 339.6M561.9 373.6 571.9 373.6 571.9 362.5 571.9 353.2 574.7 341.1 586.1 340.5 597.5 353.2 589.0 362.5 571.9 362.5M577.6 320.5 577.6 326.3 583.3 326.3 583.3 339.6M594.6 313.3 608.9 316.1 614.6 321.9M608.9 338.1 601.8 333.6M597.5 196.5 589.0 209.2 586.1 224.8M596.1 14.3 600.3 25.8 598.9 46.8 603.2 59.6 594.1 71.5M583.3 38.0 581.8 23.6 573.3 14.3M573.3 14.3 566.2 18.2 557.7 36.6 554.8 50.1 549.1 56.5 550.6 68.6 547.7 80.0M596.1 14.3 589.0 7.8 573.3 14.3M509.9 151.7 524.1 155.6M490.0 157.1 496.5 159.0 495.1 166.5 493.7 173.8M522.1 119.8 527.8 124.3 532.1 126.5 537.8 128.7 536.3 135.1 532.1 140.1 534.9 143.3 536.3 150.1M532.4 120.7 532.1 116.2 534.9 114.3 534.9 108.7M539.5 101.4 543.4 101.9M555.4 106.3 556.5 115.2 557.7 119.8 549.7 123.0 554.3 130.0 552.0 135.1 542.0 135.1 536.3 135.1M557.7 119.8 567.6 125.2 579.0 128.7 583.3 120.7 581.8 115.2 581.8 105.8 570.5 103.8M563.4 133.0 561.9 139.2 554.0 139.2 550.6 137.2M563.1 130.4 568.5 126.5M563.4 133.0 579.0 131.7M579.0 131.7 574.7 140.5 572.7 141.3M579.0 131.7 590.4 132.1 595.2 143.3 599.5 144.1M579.0 147.4 591.8 149.3 596.1 150.5M553.7 142.9 561.9 139.2 569.0 141.7 572.7 141.3 579.0 147.4 579.9 156.0 573.3 159.0 570.2 157.9M559.1 145.4 569.0 146.2 570.5 153.3 567.6 155.2M572.5 166.5 574.7 161.7 580.4 159.4 589.5 158.3 594.6 157.1M589.5 158.3 590.4 161.7M581.8 115.2 581.8 105.8 591.8 96.9 600.3 96.9 606.0 110.6 601.8 117.5 583.3 116.6M606.0 110.6 614.6 115.2 628.8 126.0 623.1 136.8M590.4 132.1 594.6 133.0 601.8 139.2M583.3 86.0 593.2 88.1M593.8 77.8 593.2 88.1 594.6 95.9 591.8 96.9M574.7 95.9 590.4 97.4M570.5 103.8 579.6 104.3 575.3 99.4M648.7 143.3 654.4 140.1 657.2 119.8 671.4 121.6 688.5 120.7 689.9 105.8 711.3 99.4 724.1 107.7 731.2 105.8 742.6 120.7 753.9 119.8 762.5 128.2M762.5 128.2 758.2 137.2 751.1 136.3 749.7 143.3 742.6 145.8 743.1 156.4M743.1 156.4 726.9 153.3 717.0 156.0 709.8 161.7 702.7 157.1 691.4 151.3 681.4 143.3 674.3 145.4 671.4 159.8 665.8 157.1M764.7 127.8 776.7 121.2 793.8 115.2 805.1 123.0 822.2 126.5 839.3 123.0 846.9 125.2 843.5 134.2 855.8 138.4 833.6 145.4 830.7 151.3 813.7 159.0 790.9 154.4 785.2 148.2 773.8 143.3 773.0 134.2 764.7 127.8M846.9 125.2 856.3 111.5 876.2 124.3 887.6 133.0 898.1 131.7 893.3 145.4 887.6 154.4 886.5 155.6M867.7 164.7 879.1 157.1 886.5 155.6M743.1 156.4 728.3 164.7 726.9 175.6 734.0 180.9 739.7 185.0 739.1 191.2 745.4 199.5 765.3 206.3 776.7 207.6 790.9 206.0 795.2 215.5 792.3 219.3 802.3 226.4 808.0 223.3 817.9 222.4 822.2 226.4M726.9 175.6 725.5 186.1 728.3 191.2 725.5 199.5 717.0 206.0 714.1 213.9 709.8 219.6M688.5 177.3 699.9 174.5 714.1 173.8 718.4 177.3 717.0 186.1 711.3 194.5 705.6 195.2 704.2 199.5 691.4 201.1 688.5 195.2 688.5 177.3M691.4 201.1 689.9 214.9M640.2 166.9 643.0 176.6 645.8 182.6 645.8 189.5 651.5 197.8M668.3 174.5 677.1 172.0 687.1 177.0 688.5 177.3M687.1 177.0 697.0 168.4 708.4 166.5 709.8 161.7M671.4 159.8 685.7 157.1 697.0 168.4M617.7 177.0 620.2 176.6 635.3 174.9 642.4 174.9 640.2 166.9 638.7 160.5 633.3 158.7M638.7 160.5 647.3 157.9 654.4 158.7M618.8 201.1 625.9 192.8 634.5 195.8 647.3 202.4 651.5 201.1M635.3 174.9 631.6 184.3 625.9 192.2 616.0 189.5M637.9 240.8 648.7 239.9 662.9 233.9 673.2 224.8 674.3 216.1M662.9 241.1 666.0 240.8 662.9 233.9M765.3 206.3 765.9 212.4 768.2 214.6 766.7 224.8M777.3 227.9 778.1 220.2 775.3 217.1 770.4 212.4M778.1 228.5 779.5 218.6 785.2 210.8 790.9 206.0M799.4 226.4 793.8 239.9 795.5 241.4 796.6 257.5 795.2 260.4M799.4 226.4 802.3 238.4 813.7 244.4 815.1 248.8 806.6 254.6M808.0 223.3 810.8 233.9 819.4 241.4 820.8 247.3 816.5 257.5 812.2 259.0M802.3 271.9 805.1 271.3M847.8 277.0 852.1 276.8M916.1 296.4 916.1 315.0M869.1 315.6 870.6 315.0"/><g><text x="570" y="130.5" fill="#2c2a42" font-size="12" font-weight="bold" letter-spacing="0.15" text-anchor="middle">EUROPE</text><text x="783" y="136.5" fill="#2c2a42" font-size="12" font-weight="bold" letter-spacing="0.15" text-anchor="middle">ASIA</text><text x="217" y="142.5" fill="#2c2a42" font-size="12" font-weight="bold" letter-spacing="0.15" text-anchor="middle">NORTH</text><text x="217" y="156.5" fill="#2c2a42" font-size="12" font-weight="bold" letter-spacing="0.15" text-anchor="middle">AMERICA</text><text x="588" y="277.5" fill="#2c2a42" font-size="12" font-weight="bold" letter-spacing="0.15" text-anchor="middle">AFRICA</text><text x="351" y="327.5" fill="#2c2a42" font-size="12" font-weight="bold" letter-spacing="0.15" text-anchor="middle">SOUTH</text><text x="351" y="341.5" fill="#2c2a42" font-size="12" font-weight="bold" letter-spacing="0.15" text-anchor="middle">AMERICA</text><text x="891" y="361.5" fill="#2c2a42" font-size="12" font-weight="bold" letter-spacing="0.15" text-anchor="middle">AUSTRALIA</text><text x="410" y="149.5" fill="#27262e" font-size="12.5" font-style="italic" letter-spacing="3.2" text-anchor="middle">North</text><text x="410" y="167.5" fill="#27262e" font-size="12.5" font-style="italic" letter-spacing="3.2" text-anchor="middle">Atlantic</text><text x="410" y="184.5" fill="#27262e" font-size="12.5" font-style="italic" letter-spacing="3.2" text-anchor="middle">Ocean</text><text x="53" y="166.5" fill="#27262e" font-size="12.5" font-style="italic" letter-spacing="3.2" text-anchor="middle">North</text><text x="53" y="183.5" fill="#27262e" font-size="12.5" font-style="italic" letter-spacing="3.2" text-anchor="middle">Pacific</text><text x="53" y="200.5" fill="#27262e" font-size="12.5" font-style="italic" letter-spacing="3.2" text-anchor="middle">Ocean</text><text x="741" y="353.5" fill="#27262e" font-size="12.5" font-style="italic" letter-spacing="3.2" text-anchor="middle">Indian</text><text x="741" y="370.5" fill="#27262e" font-size="12.5" font-style="italic" letter-spacing="3.2" text-anchor="middle">Ocean</text><text x="471" y="361.5" fill="#27262e" font-size="12.5" font-style="italic" letter-spacing="3.2" text-anchor="middle">South</text><text x="471" y="378.5" fill="#27262e" font-size="12.5" font-style="italic" letter-spacing="3.2" text-anchor="middle">Atlantic</text><text x="471" y="395.5" fill="#27262e" font-size="12.5" font-style="italic" letter-spacing="3.2" text-anchor="middle">Ocean</text><text x="99" y="377.5" fill="#27262e" font-size="12.5" font-style="italic" letter-spacing="3.2" text-anchor="middle">South</text><text x="99" y="394.5" fill="#27262e" font-size="12.5" font-style="italic" letter-spacing="3.2" text-anchor="middle">Pacific</text><text x="461" y="48" fill="#8f8f95" stroke="#0b0a12" stroke-width="2" paint-order="stroke" font-size="10.5" font-weight="bold" letter-spacing="-0.5" text-anchor="middle">Iceland</text><text x="564" y="48" fill="#8f8f95" stroke="#0b0a12" stroke-width="2" paint-order="stroke" font-size="10.5" font-weight="bold" letter-spacing="-0.5" text-anchor="middle">Sweden</text><text x="539" y="72" fill="#8f8f95" stroke="#0b0a12" stroke-width="2" paint-order="stroke" font-size="10.5" font-weight="bold" letter-spacing="-0.5" text-anchor="middle">Norway</text><text x="789" y="67" fill="#8f8f95" stroke="#0b0a12" stroke-width="2" paint-order="stroke" font-size="10.5" font-weight="bold" letter-spacing="-0.5" text-anchor="middle">Russia</text><text x="213" y="103" fill="#8f8f95" stroke="#0b0a12" stroke-width="2" paint-order="stroke" font-size="10.5" font-weight="bold" letter-spacing="-0.5" text-anchor="middle">Canada</text><text x="507" y="103" fill="#8f8f95" stroke="#0b0a12" stroke-width="2" paint-order="stroke" font-size="10.5" font-weight="bold" letter-spacing="-0.5" text-anchor="middle">United</text><text x="507" y="115" fill="#8f8f95" stroke="#0b0a12" stroke-width="2" paint-order="stroke" font-size="10.5" font-weight="bold" letter-spacing="-0.5" text-anchor="middle">Kingdom</text><text x="594" y="113" fill="#8f8f95" stroke="#0b0a12" stroke-width="2" paint-order="stroke" font-size="10.5" font-weight="bold" letter-spacing="-0.5" text-anchor="middle">Belarus</text><text x="521" y="138" fill="#8f8f95" stroke="#0b0a12" stroke-width="2" paint-order="stroke" font-size="10.5" font-weight="bold" letter-spacing="-0.5" text-anchor="middle">France</text><text x="705" y="137" fill="#8f8f95" stroke="#0b0a12" stroke-width="2" paint-order="stroke" font-size="10.5" font-weight="bold" letter-spacing="-0.5" text-anchor="middle">Kazakhstan</text><text x="502" y="164" fill="#8f8f95" stroke="#0b0a12" stroke-width="2" paint-order="stroke" font-size="10.5" font-weight="bold" letter-spacing="-0.5" text-anchor="middle">Spain</text><text x="550" y="160" fill="#8f8f95" stroke="#0b0a12" stroke-width="2" paint-order="stroke" font-size="10.5" font-weight="bold" letter-spacing="-0.5" text-anchor="middle">Italy</text><text x="582" y="174" fill="#8f8f95" stroke="#0b0a12" stroke-width="2" paint-order="stroke" font-size="10.5" font-weight="bold" letter-spacing="-0.5" text-anchor="middle">Greece</text><text x="683" y="172" fill="#8f8f95" stroke="#0b0a12" stroke-width="2" paint-order="stroke" font-size="10.5" font-weight="bold" letter-spacing="-0.5" text-anchor="middle">Turkmenistan</text><text x="542" y="190" fill="#8f8f95" stroke="#0b0a12" stroke-width="2" paint-order="stroke" font-size="10.5" font-weight="bold" letter-spacing="-0.5" text-anchor="middle">Tunisia</text><text x="804" y="185" fill="#8f8f95" stroke="#0b0a12" stroke-width="2" paint-order="stroke" font-size="10.5" font-weight="bold" letter-spacing="-0.5" text-anchor="middle">China</text><text x="908" y="183" fill="#8f8f95" stroke="#0b0a12" stroke-width="2" paint-order="stroke" font-size="10.5" font-weight="bold" letter-spacing="-0.5" text-anchor="middle">Japan</text><text x="637" y="194" fill="#8f8f95" stroke="#0b0a12" stroke-width="2" paint-order="stroke" font-size="10.5" font-weight="bold" letter-spacing="-0.5" text-anchor="middle">Iraq</text><text x="668" y="196" fill="#8f8f95" stroke="#0b0a12" stroke-width="2" paint-order="stroke" font-size="10.5" font-weight="bold" letter-spacing="-0.5" text-anchor="middle">Iran</text><text x="521" y="211" fill="#8f8f95" stroke="#0b0a12" stroke-width="2" paint-order="stroke" font-size="10.5" font-weight="bold" letter-spacing="-0.5" text-anchor="middle">Algeria</text><text x="565" y="214" fill="#8f8f95" stroke="#0b0a12" stroke-width="2" paint-order="stroke" font-size="10.5" font-weight="bold" letter-spacing="-0.5" text-anchor="middle">Libya</text><text x="599" y="216" fill="#8f8f95" stroke="#0b0a12" stroke-width="2" paint-order="stroke" font-size="10.5" font-weight="bold" letter-spacing="-0.5" text-anchor="middle">Egypt</text><text x="706" y="210" fill="#8f8f95" stroke="#0b0a12" stroke-width="2" paint-order="stroke" font-size="10.5" font-weight="bold" letter-spacing="-0.5" text-anchor="middle">Pakistan</text><text x="770" y="222" fill="#8f8f95" stroke="#0b0a12" stroke-width="2" paint-order="stroke" font-size="10.5" font-weight="bold" letter-spacing="-0.5" text-anchor="middle">Bangladesh</text><text x="222" y="223" fill="#8f8f95" stroke="#0b0a12" stroke-width="2" paint-order="stroke" font-size="10.5" font-weight="bold" letter-spacing="-0.5" text-anchor="middle">Mexico</text><text x="288" y="229" fill="#8f8f95" stroke="#0b0a12" stroke-width="2" paint-order="stroke" font-size="10.5" font-weight="bold" letter-spacing="-0.5" text-anchor="middle">Cuba</text><text x="676" y="231" fill="#8f8f95" stroke="#0b0a12" stroke-width="2" paint-order="stroke" font-size="10.5" font-weight="bold" letter-spacing="-0.5" text-anchor="middle">Oman</text><text x="471" y="250" fill="#8f8f95" stroke="#0b0a12" stroke-width="2" paint-order="stroke" font-size="10.5" font-weight="bold" letter-spacing="-0.5" text-anchor="middle">Senegal</text><text x="510" y="243" fill="#8f8f95" stroke="#0b0a12" stroke-width="2" paint-order="stroke" font-size="10.5" font-weight="bold" letter-spacing="-0.5" text-anchor="middle">Mali</text><text x="541" y="243" fill="#8f8f95" stroke="#0b0a12" stroke-width="2" paint-order="stroke" font-size="10.5" font-weight="bold" letter-spacing="-0.5" text-anchor="middle">Niger</text><text x="649" y="247" fill="#8f8f95" stroke="#0b0a12" stroke-width="2" paint-order="stroke" font-size="10.5" font-weight="bold" letter-spacing="-0.5" text-anchor="middle">Yemen</text><text x="599" y="253" fill="#8f8f95" stroke="#0b0a12" stroke-width="2" paint-order="stroke" font-size="10.5" font-weight="bold" letter-spacing="-0.5" text-anchor="middle">Sudan</text><text x="812" y="257" fill="#8f8f95" stroke="#0b0a12" stroke-width="2" paint-order="stroke" font-size="10.5" font-weight="bold" letter-spacing="-0.5" text-anchor="middle">Cambodia</text><text x="327" y="272" fill="#8f8f95" stroke="#0b0a12" stroke-width="2" paint-order="stroke" font-size="10.5" font-weight="bold" letter-spacing="-0.5" text-anchor="middle">Venezuela</text><text x="536" y="267" fill="#8f8f95" stroke="#0b0a12" stroke-width="2" paint-order="stroke" font-size="10.5" font-weight="bold" letter-spacing="-0.5" text-anchor="middle">Nigeria</text><text x="648" y="277" fill="#8f8f95" stroke="#0b0a12" stroke-width="2" paint-order="stroke" font-size="10.5" font-weight="bold" letter-spacing="-0.5" text-anchor="middle">Somalia</text><text x="722" y="284" fill="#8f8f95" stroke="#0b0a12" stroke-width="2" paint-order="stroke" font-size="10.5" font-weight="bold" letter-spacing="-0.5" text-anchor="middle">Maldives</text><text x="805" y="281" fill="#8f8f95" stroke="#0b0a12" stroke-width="2" paint-order="stroke" font-size="10.5" font-weight="bold" letter-spacing="-0.5" text-anchor="middle">Malaysia</text><text x="291" y="297" fill="#8f8f95" stroke="#0b0a12" stroke-width="2" paint-order="stroke" font-size="10.5" font-weight="bold" letter-spacing="-0.5" text-anchor="middle">Ecuador</text><text x="847" y="300" fill="#8f8f95" stroke="#0b0a12" stroke-width="2" paint-order="stroke" font-size="10.5" font-weight="bold" letter-spacing="-0.5" text-anchor="middle">Indonesia</text><text x="927" y="306" fill="#8f8f95" stroke="#0b0a12" stroke-width="2" paint-order="stroke" font-size="10.5" font-weight="bold" letter-spacing="-0.5" text-anchor="middle">Papua New</text><text x="927" y="318" fill="#8f8f95" stroke="#0b0a12" stroke-width="2" paint-order="stroke" font-size="10.5" font-weight="bold" letter-spacing="-0.5" text-anchor="middle">Guinea</text><text x="612" y="311" fill="#8f8f95" stroke="#0b0a12" stroke-width="2" paint-order="stroke" font-size="10.5" font-weight="bold" letter-spacing="-0.5" text-anchor="middle">Tanzania</text><text x="299" y="323" fill="#8f8f95" stroke="#0b0a12" stroke-width="2" paint-order="stroke" font-size="10.5" font-weight="bold" letter-spacing="-0.5" text-anchor="middle">Peru</text><text x="565" y="328" fill="#8f8f95" stroke="#0b0a12" stroke-width="2" paint-order="stroke" font-size="10.5" font-weight="bold" letter-spacing="-0.5" text-anchor="middle">Angola</text><text x="647" y="350" fill="#8f8f95" stroke="#0b0a12" stroke-width="2" paint-order="stroke" font-size="10.5" font-weight="bold" letter-spacing="-0.5" text-anchor="middle">Madagascar</text><text x="563" y="355" fill="#8f8f95" stroke="#0b0a12" stroke-width="2" paint-order="stroke" font-size="10.5" font-weight="bold" letter-spacing="-0.5" text-anchor="middle">Namibia</text><text x="581" y="378" fill="#8f8f95" stroke="#0b0a12" stroke-width="2" paint-order="stroke" font-size="10.5" font-weight="bold" letter-spacing="-0.5" text-anchor="middle">South Africa</text><text x="315" y="373" fill="#8f8f95" stroke="#0b0a12" stroke-width="2" paint-order="stroke" font-size="10.5" font-weight="bold" letter-spacing="-0.5" text-anchor="middle">Chile</text><text x="355" y="392" fill="#8f8f95" stroke="#0b0a12" stroke-width="2" paint-order="stroke" font-size="10.5" font-weight="bold" letter-spacing="-0.5" text-anchor="middle">Uruguay</text></g><rect x="966.5" y="383" width="61.5" height="17" fill="#cfcfd3"/><rect x="972" y="385.3" width="12" height="3.6" fill="#4a72b8"/><rect x="972" y="390.2" width="12" height="3.2" fill="#efc94f"/><text x="987" y="394.8" fill="#1d6a8c" font-size="12">Leaflet</text></svg></div>

<div class="stat" style="left:1400px;top:204px;background:#f4f5f7"><div class="l" style="top:54px">TOTAL CLUSTERS</div><div class="n" style="top:72px;color:#2f3237">0</div></div>
<div class="stat" style="left:1608px;top:204px;background:#fbe9ec"><div class="l" style="top:54px">FAILED CLUSTERS</div><div class="n" style="top:72px;color:#d2466a">0</div></div>
<div class="stat" style="left:1400px;top:387px;background:#fcf1ea"><div class="l" style="top:46px">DEGRADED<br>CLUSTERS</div><div class="n" style="top:79px;color:#b57a45">0</div></div>
<div class="stat" style="left:1608px;top:387px;background:#eaf4fd"><div class="l" style="top:53px">UPDATES PENDING</div><div class="n" style="top:72px;color:#3ea0d8">0</div></div>
<div class="a" style="left:1515px;top:573px;font-size:14.5px;color:#3b3e44;line-height:17px;letter-spacing:0.12px">View Clusters List</div>
<svg class="a" style="left:1640px;top:573px" width="16" height="16"><path d="M2 8 L13 8 M8.5 3.5 L13 8 L8.5 12.5" fill="none" stroke="#3b3e44" stroke-width="1.6"/></svg>

<div class="card" style="left:258px;top:639px;width:1600px;height:300px"></div>
<div class="a" style="left:270px;top:654px;width:81px;height:32px;background:#465667;border-radius:2px 0 0 2px"></div>
<div class="a" style="left:282px;top:662px;font-size:15px;color:#fff;line-height:17px;letter-spacing:0.4px;-webkit-text-stroke:0.25px currentColor">Projects</div>
<div class="a" style="left:351px;top:654px;width:73px;height:32px;background:#e4e7ea;border-radius:0 2px 2px 0"></div>
<div class="a" style="left:364px;top:662px;font-size:15px;color:#4f5867;line-height:17px;-webkit-text-stroke:0.25px currentColor">Clouds</div>
<div class="a" style="left:432px;top:654px;width:300px;height:32px;background:#e7e9eb;border-radius:3px"></div>
<div class="a" style="left:444px;top:662px;font-size:15px;color:#abaeb3;line-height:17px;letter-spacing:0.27px">Filter by projects</div>
<svg class="a" style="left:708px;top:666px" width="14" height="10"><path d="M2 2 L7 7 L12 2" fill="none" stroke="#a3a6ab" stroke-width="1.1"/></svg>
<div class="a" style="left:740px;top:662px;width:16px;height:16px;background:#5b55a8;border-radius:2px"></div>
<svg class="a" style="left:740px;top:662px" width="16" height="16"><path d="M4 8.3 L7 11 L12.2 5" fill="none" stroke="#fff" stroke-width="1.8"/></svg>
<div class="a" style="left:764px;top:662px;font-size:15px;color:#26282c;line-height:17px;letter-spacing:0.41px">Include Tenant scoped clusters</div>
<div class="a" style="left:258px;top:701px;width:1600px;height:1px;background:#e6e8eb"></div>

<div class="a" style="left:282px;top:728px;font-size:16.5px;color:#4f5257;line-height:19px;letter-spacing:0.8px">Cumulative Costs</div>
<div class="a" style="left:282px;top:758px;width:64px;height:1px;background:#cfd1d4"></div>
<div class="a" style="left:270px;top:830px;width:28px;height:34px"><div style="position:absolute;left:-3px;top:11px;width:34px;font-size:12px;color:#333;transform:rotate(-90deg);text-align:center;line-height:12px">COST</div></div>
<svg class="a" style="left:258px;top:780px" width="1600" height="151" viewBox="258 780 1600 151">
<defs><pattern id="hatch" patternUnits="userSpaceOnUse" width="3.6" height="3.6" patternTransform="rotate(45)"><rect width="1" height="3.6" fill="#d6d6d6"/></pattern></defs>
<rect x="343" y="809" width="49.5" height="101.5" fill="#f5f5f5"/><rect x="343" y="809" width="49.5" height="101.5" fill="url(#hatch)"/>
<line x1="336.5" y1="797" x2="343" y2="797" stroke="#8e8e8e" stroke-width="2"/>
<line x1="345" y1="797" x2="1827" y2="797" stroke="#e2e2e2" stroke-width="1.2" stroke-dasharray="2.5 5.4"/>
<line x1="336.5" y1="819.7" x2="343" y2="819.7" stroke="#8e8e8e" stroke-width="2"/>
<line x1="345" y1="819.7" x2="1827" y2="819.7" stroke="#e2e2e2" stroke-width="1.2" stroke-dasharray="2.5 5.4"/>
<line x1="336.5" y1="842.3" x2="343" y2="842.3" stroke="#8e8e8e" stroke-width="2"/>
<line x1="345" y1="842.3" x2="1827" y2="842.3" stroke="#e2e2e2" stroke-width="1.2" stroke-dasharray="2.5 5.4"/>
<line x1="336.5" y1="864.9" x2="343" y2="864.9" stroke="#8e8e8e" stroke-width="2"/>
<line x1="345" y1="864.9" x2="1827" y2="864.9" stroke="#e2e2e2" stroke-width="1.2" stroke-dasharray="2.5 5.4"/>
<line x1="336.5" y1="887.6" x2="343" y2="887.6" stroke="#8e8e8e" stroke-width="2"/>
<line x1="345" y1="887.6" x2="1827" y2="887.6" stroke="#e2e2e2" stroke-width="1.2" stroke-dasharray="2.5 5.4"/>
<line x1="336.5" y1="910.3" x2="343" y2="910.3" stroke="#8e8e8e" stroke-width="2"/>
<line x1="345" y1="910.3" x2="1827" y2="910.3" stroke="#e2e2e2" stroke-width="1.2" stroke-dasharray="2.5 5.4"/>
<text x="333" y="801" text-anchor="end" font-family="Liberation Sans" font-size="11.2" fill="#333">$10.00</text>
<text x="333" y="823.7" text-anchor="end" font-family="Liberation Sans" font-size="11.2" fill="#333">$8.00</text>
<text x="333" y="846.3" text-anchor="end" font-family="Liberation Sans" font-size="11.2" fill="#333">$6.00</text>
<text x="333" y="868.9" text-anchor="end" font-family="Liberation Sans" font-size="11.2" fill="#333">$4.00</text>
<text x="333" y="891.6" text-anchor="end" font-family="Liberation Sans" font-size="11.2" fill="#333">$2.00</text>
<text x="333" y="914.3" text-anchor="end" font-family="Liberation Sans" font-size="11.2" fill="#333">$0.00</text>
<text x="343.0" y="932" text-anchor="middle" font-family="Liberation Sans" font-size="10.5" fill="#555">1</text>
<text x="392.5" y="932" text-anchor="middle" font-family="Liberation Sans" font-size="10.5" fill="#555">2</text>
<text x="441.9" y="932" text-anchor="middle" font-family="Liberation Sans" font-size="10.5" fill="#555">3</text>
<text x="491.4" y="932" text-anchor="middle" font-family="Liberation Sans" font-size="10.5" fill="#555">4</text>
<text x="540.9" y="932" text-anchor="middle" font-family="Liberation Sans" font-size="10.5" fill="#555">5</text>
<text x="590.4" y="932" text-anchor="middle" font-family="Liberation Sans" font-size="10.5" fill="#555">6</text>
<text x="639.8" y="932" text-anchor="middle" font-family="Liberation Sans" font-size="10.5" fill="#555">7</text>
<text x="689.3" y="932" text-anchor="middle" font-family="Liberation Sans" font-size="10.5" fill="#555">8</text>
<text x="738.8" y="932" text-anchor="middle" font-family="Liberation Sans" font-size="10.5" fill="#555">9</text>
<text x="788.2" y="932" text-anchor="middle" font-family="Liberation Sans" font-size="10.5" fill="#555">10</text>
<text x="837.7" y="932" text-anchor="middle" font-family="Liberation Sans" font-size="10.5" fill="#555">11</text>
<text x="887.2" y="932" text-anchor="middle" font-family="Liberation Sans" font-size="10.5" fill="#555">12</text>
<text x="936.6" y="932" text-anchor="middle" font-family="Liberation Sans" font-size="10.5" fill="#555">13</text>
<text x="986.1" y="932" text-anchor="middle" font-family="Liberation Sans" font-size="10.5" fill="#555">14</text>
<text x="1035.6" y="932" text-anchor="middle" font-family="Liberation Sans" font-size="10.5" fill="#555">15</text>
<text x="1085.0" y="932" text-anchor="middle" font-family="Liberation Sans" font-size="10.5" fill="#555">16</text>
<text x="1134.5" y="932" text-anchor="middle" font-family="Liberation Sans" font-size="10.5" fill="#555">17</text>
<text x="1184.0" y="932" text-anchor="middle" font-family="Liberation Sans" font-size="10.5" fill="#555">18</text>
<text x="1233.5" y="932" text-anchor="middle" font-family="Liberation Sans" font-size="10.5" fill="#555">19</text>
<text x="1282.9" y="932" text-anchor="middle" font-family="Liberation Sans" font-size="10.5" fill="#555">20</text>
<text x="1332.4" y="932" text-anchor="middle" font-family="Liberation Sans" font-size="10.5" fill="#555">21</text>
<text x="1381.9" y="932" text-anchor="middle" font-family="Liberation Sans" font-size="10.5" fill="#555">22</text>
<text x="1431.3" y="932" text-anchor="middle" font-family="Liberation Sans" font-size="10.5" fill="#555">23</text>
<text x="1480.8" y="932" text-anchor="middle" font-family="Liberation Sans" font-size="10.5" fill="#555">24</text>
<text x="1530.3" y="932" text-anchor="middle" font-family="Liberation Sans" font-size="10.5" fill="#555">25</text>
<text x="1579.8" y="932" text-anchor="middle" font-family="Liberation Sans" font-size="10.5" fill="#555">26</text>
<text x="1629.2" y="932" text-anchor="middle" font-family="Liberation Sans" font-size="10.5" fill="#555">27</text>
<text x="1678.7" y="932" text-anchor="middle" font-family="Liberation Sans" font-size="10.5" fill="#555">28</text>
<text x="1728.2" y="932" text-anchor="middle" font-family="Liberation Sans" font-size="10.5" fill="#555">29</text>
<text x="1777.6" y="932" text-anchor="middle" font-family="Liberation Sans" font-size="10.5" fill="#555">30</text>
<text x="1827.1" y="932" text-anchor="middle" font-family="Liberation Sans" font-size="10.5" fill="#555">31</text>
</svg>

<!-- dropdown menu -->
<div class="a" style="left:1569px;top:50px;width:316px;height:144px;background:#fff;box-shadow:0 4px 22px rgba(0,0,0,0.09)"></div>
<div class="a" style="left:1576px;top:148px;width:304px;height:40px;border:3px solid #d42a68;border-radius:2px"></div>
<svg class="a" style="left:1585px;top:56px" width="16" height="18" viewBox="1585 56 16 18"><circle cx="1593" cy="62.8" r="4.1" fill="none" stroke="#4a4f57" stroke-width="1.6"/><path d="M1587 72.8 L1587 71 Q1587 68 1590.5 68 L1595.5 68 Q1599 68 1599 71 L1599 72.8 Z M1591 69.6 L1593 71.8 L1595 69.6 Z" fill="#4a4f57" fill-rule="evenodd"/></svg>
<div class="a" style="left:1609px;top:58px;font-size:14.5px;color:#4a4f57;line-height:17px;letter-spacing:0.3px;-webkit-text-stroke:0.25px currentColor">My Profile</div>
<svg class="a" style="left:1585px;top:92px" width="16" height="16" viewBox="0 0 16 16"><g fill="#4a4f57"><circle cx="10.8" cy="5.2" r="4.6"/><path d="M7.6 6.2 L9.8 8.4 L4 14.2 Q3 15.2 2 14.2 L1.8 14 Q0.8 13 1.8 12 Z"/></g><circle cx="11.8" cy="4.2" r="1.3" fill="#fff"/></svg>
<div class="a" style="left:1611px;top:92px;font-size:14.5px;color:#4a4f57;line-height:17px;letter-spacing:-0.25px;-webkit-text-stroke:0.25px currentColor">My API Keys</div>
<svg class="a" style="left:1586px;top:126px" width="20" height="16" viewBox="0 0 20 16"><g fill="none" stroke="#4a4f57" stroke-width="1.5" stroke-linecap="round" stroke-linejoin="round"><path d="M2.2 5.6 L4.5 3.3 L6.8 5.6 M4.5 3.8 L4.5 9.8 Q4.5 11.5 6.2 11.5 L10 11.5"/><path d="M9.6 4.2 L13.4 4.2 Q15 4.2 15 5.8 L15 12 M12.7 10 L15 12.4 L17.3 10"/></g></svg>
<div class="a" style="left:1614px;top:126px;font-size:14.5px;color:#4a4f57;line-height:17px;letter-spacing:0.5px;-webkit-text-stroke:0.25px currentColor">Switch to App Mode</div>
<svg class="a" style="left:1586px;top:160px" width="16" height="16" viewBox="0 0 16 16"><g fill="none" stroke="#4a4f57" stroke-width="1.3"><path d="M5 3.8 C3 4.9 1.8 6.8 1.8 9 C1.8 12.3 4.6 15 8 15 C11.4 15 14.2 12.3 14.2 9 C14.2 6.8 13 4.9 11 3.8"/><path d="M8 1 L8 8.5"/></g></svg>
<div class="a" style="left:1611px;top:160px;font-size:14.5px;color:#4a4f57;line-height:17px;letter-spacing:0.55px;-webkit-text-stroke:0.25px currentColor">Logout from <b style="color:#2b2e33">car</b></div>
<div class="a" style="left:1724px;top:161px;width:142px;height:16px;background:linear-gradient(90deg,rgba(195,195,195,0.75),rgba(200,200,200,0.7) 30%,rgba(215,215,215,0.55) 55%,rgba(195,195,195,0.75) 80%,rgba(215,215,215,0.45));filter:blur(2.5px);border-radius:6px"></div>


<!-- help button -->
<div class="a" style="left:1849px;top:863px;width:48px;height:48px;border-radius:24px;background:#177571;box-shadow:0 2px 6px rgba(0,0,0,0.15)"></div><svg class="a" style="left:1849px;top:863px" width="48" height="48" viewBox="1849 863 48 48"><g fill="none" stroke="#fff" stroke-linecap="round"><circle cx="1870.7" cy="883.8" r="9.6" stroke-width="2"/><path d="M1866 885.5 Q1870.7 889 1875.4 885.5" stroke-width="1.8"/><path d="M1878 891.5 L1884.5 898" stroke-width="3.4"/></g></svg>
<div class="a" style="left:1903px;top:108px;width:3px;height:823px;background:#fcfcfd"></div>
</body></html>
